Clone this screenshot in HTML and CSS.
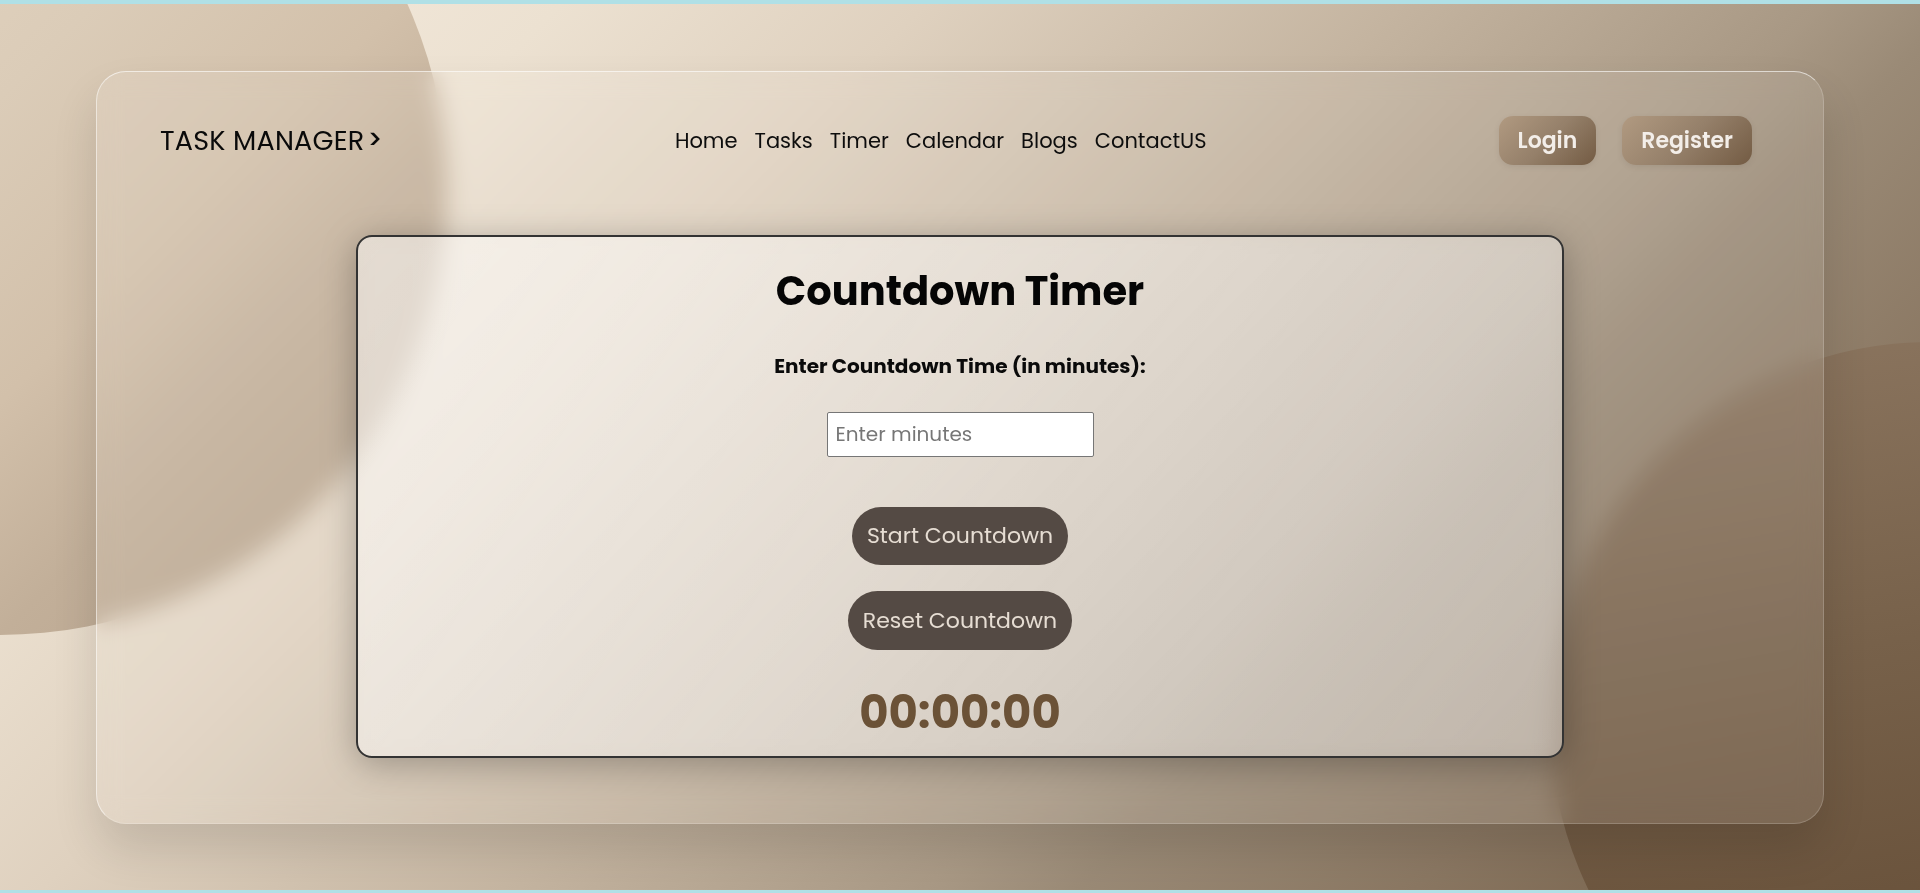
FILE: index.html
```html
<!DOCTYPE html>
<html lang="en">
<head>
<meta charset="utf-8">
<title>Task Manager - Countdown Timer</title>
<link rel="stylesheet" href="styles.css">
</head>
<body>
<section class="page">
  <div class="circle circle-one"></div>
  <div class="circle circle-two"></div>
  <div class="card">
    <nav class="nav">
      <div class="logo">TASK MANAGER<span class="chev">&gt;</span></div>
      <ul class="links">
        <li><a href="#">Home</a></li>
        <li><a href="#">Tasks</a></li>
        <li><a href="#">Timer</a></li>
        <li><a href="#">Calendar</a></li>
        <li><a href="#">Blogs</a></li>
        <li><a href="#">ContactUS</a></li>
      </ul>
      <div class="auth">
        <button class="auth-btn">Login</button>
        <button class="auth-btn">Register</button>
      </div>
    </nav>
    <div class="panel">
      <h1 class="title">Countdown Timer</h1>
      <label class="label" for="minutes">Enter Countdown Time (in minutes):</label>
      <input class="minutes" id="minutes" type="number" placeholder="Enter minutes">
      <button class="pill start">Start Countdown</button>
      <button class="pill reset">Reset Countdown</button>
      <div class="timer">00:00:00</div>
    </div>
  </div>
</section>
</body>
</html>
```

FILE: styles.css
```css
* { box-sizing: border-box; }

html, body {
  margin: 0;
  padding: 0;
}

body {
  background: #b0e0e6;
  font-family: "Poppins", "Inter", sans-serif;
  overflow: hidden;
}

.page {
  position: relative;
  margin-top: 4px;
  height: 886px;
  overflow: hidden;
  display: flex;
  align-items: center;
  justify-content: center;
  background: linear-gradient(135deg, #f7eee2 0%, #ece1d1 20%, #dfd1bf 33%, #c4b4a0 50%, #a89884 65%, #9a8a76 70%, #8a7762 82%, #6e5841 100%);
}

.circle {
  position: absolute;
  border-radius: 50%;
}

.circle-one {
  left: -447px;
  top: -263px;
  width: 894px;
  height: 894px;
  background: linear-gradient(135deg, #f0e1ce 0%, #dbccb8 45%, #d2c0aa 62%, #c2af99 75%, #b29e87 100%);
}

.circle-two {
  left: 1550px;
  top: 338px;
  width: 762px;
  height: 762px;
  background: linear-gradient(170deg, #8c7660 0%, #77614a 40%, #6a533c 70%, #634c35 100%);
}

.card {
  position: relative;
  width: 1728px;
  height: 753px;
  border-radius: 30px;
  background: rgba(255, 255, 255, 0.1);
  backdrop-filter: blur(12px);
  border: 1px solid rgba(255, 255, 255, 0.18);
  border-top-color: rgba(255, 255, 255, 0.6);
  border-left-color: rgba(255, 255, 255, 0.5);
  box-shadow: 0 25px 45px rgba(0, 0, 0, 0.12);
  padding-top: 44px;
}

.nav {
  height: 50px;
  display: flex;
  align-items: center;
  justify-content: space-between;
  padding: 0 71px 0 63px;
}

.logo {
  font-size: 27px;
  font-weight: 400;
  color: #0a0a0a;
  letter-spacing: 0.2px;
  display: flex;
  align-items: center;
}

.chev {
  font-size: 26px;
  margin-left: 3px;
  font-weight: 500;
}

.links {
  list-style: none;
  margin: 0;
  padding: 0;
  display: flex;
  gap: 17px;
}

.links a {
  text-decoration: none;
  color: #0d0d0d;
  font-size: 21px;
  font-weight: 400;
}

.auth {
  display: flex;
  gap: 26px;
}

.auth-btn {
  height: 49px;
  padding: 0 19px;
  border: none;
  border-radius: 14px;
  font-family: inherit;
  font-size: 22px;
  font-weight: 600;
  color: #f3eee9;
  background: linear-gradient(135deg, #b19a81 0%, #95806a 50%, #735b43 100%);
  box-shadow: 0 2px 6px rgba(0, 0, 0, 0.08);
}

.panel {
  width: 70%;
  margin: 69px auto 0;
  border: 2px solid #333;
  border-radius: 16px;
  background: linear-gradient(120deg, rgba(255, 255, 255, 0.45) 0%, rgba(255, 255, 255, 0.4) 50%, rgba(255, 255, 255, 0.33) 100%);
  backdrop-filter: blur(10px);
  box-shadow: 0 6px 35px rgba(0, 0, 0, 0.28);
  padding: 30px 20px 15px;
  display: flex;
  flex-direction: column;
  align-items: center;
}

.title {
  margin: 0;
  font-size: 40px;
  line-height: 48px;
  font-weight: 700;
  color: #050505;
}

.label {
  margin-top: 39px;
  font-size: 20px;
  line-height: 24px;
  font-weight: 700;
  color: #0a0a0a;
}

.minutes {
  margin-top: 34px;
  width: 267px;
  height: 45px;
  padding: 0 8px;
  border: 1px solid #767676;
  border-radius: 2px;
  background: #fff;
  font-family: inherit;
  font-size: 20px;
  color: #222;
}

.minutes::placeholder {
  color: #767676;
}

.pill {
  border: none;
  border-radius: 30px;
  background: #544a44;
  color: #e6ddd3;
  font-family: inherit;
  font-size: 22px;
  font-weight: 400;
  padding: 0 15px;
}

.start {
  margin-top: 50px;
  height: 58px;
}

.reset {
  margin-top: 26px;
  height: 59px;
}

.timer {
  margin-top: 35px;
  font-size: 45px;
  line-height: 56px;
  font-weight: 700;
  color: #6b5237;
}
```
